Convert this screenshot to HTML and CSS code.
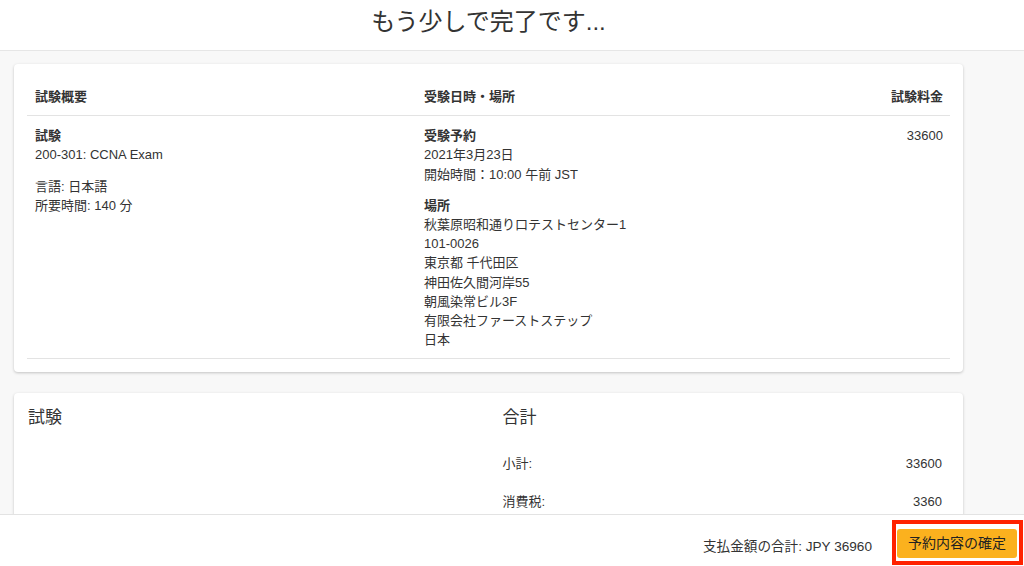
FILE: index.html
```html
<!DOCTYPE html>
<html lang="ja">
<head>
    <meta charset="UTF-8">
    <meta name="viewport" content="width=device-width, initial-scale=1.0">
    <title>予約内容の確認</title>
    <link rel="stylesheet" href="styles.css">
</head>
<body>
    <div class="page">
        <header class="top">
            <h1>もう少しで完了です...</h1>
        </header>

        <main class="main">
            <div class="card">
                <table class="summary">
                    <thead>
                        <tr>
                            <th class="col-exam">試験概要</th>
                            <th>受験日時・場所</th>
                            <th class="num">試験料金</th>
                        </tr>
                    </thead>
                    <tbody>
                        <tr>
                            <td class="col-exam">
                                <p><b>試験</b><br>200-301: CCNA Exam</p>
                                <p>言語: 日本語<br>所要時間: 140 分</p>
                            </td>
                            <td>
                                <p><b>受験予約</b><br>2021年3月23日<br>開始時間：10:00 午前 JST</p>
                                <p><b>場所</b><br>秋葉原昭和通り口テストセンター1<br>101-0026<br>東京都 千代田区<br>神田佐久間河岸55<br>朝風染常ビル3F<br>有限会社ファーストステップ<br>日本</p>
                            </td>
                            <td class="num">33600</td>
                        </tr>
                    </tbody>
                </table>
            </div>

            <div class="card totals">
                <div class="totals-col">
                    <h2>試験</h2>
                </div>
                <div class="totals-col">
                    <h2>合計</h2>
                    <div class="line"><span>小計:</span><span>33600</span></div>
                    <div class="line"><span>消費税:</span><span>3360</span></div>
                </div>
            </div>
        </main>

        <footer class="bottom">
            <div class="grand">支払金額の合計: JPY 36960</div>
            <div class="highlight">
                <button class="confirm">予約内容の確定</button>
            </div>
        </footer>
    </div>
</body>
</html>
```

FILE: styles.css
```css
* {
    box-sizing: border-box;
}
html, body {
    margin: 0;
    height: 100%;
}
body {
    font-family: "Liberation Sans", "Noto Sans CJK JP", sans-serif;
    font-size: 13px;
    color: #333;
    background: #f8f8f8;
}
.page {
    height: 100vh;
    display: flex;
    flex-direction: column;
}
.top {
    height: 51px;
    flex: none;
    background: white;
    border-bottom: 1px solid #e6e6e6;
}
.top h1 {
    width: 977px;
    margin: 0;
    text-align: center;
    font-size: 24px;
    font-weight: normal;
    line-height: 44px;
    color: #333;
}
.main {
    flex: 1;
    overflow: hidden;
    padding: 13px 0 0 14px;
}
.card {
    width: 949px;
    background: white;
    border-radius: 4px;
    box-shadow: 0 1px 3px rgba(0, 0, 0, 0.22);
}
.summary {
    width: calc(100% - 26px);
    margin: 0 13px;
    border-collapse: collapse;
    line-height: 19.2px;
}
.card:first-child {
    padding: 15px 0 13px;
}
.summary th {
    text-align: left;
    font-weight: bold;
    color: #333;
    padding: 8px 8px 9px;
    border-bottom: 1px solid #e3e3e3;
}
.summary td {
    vertical-align: top;
    padding: 10px 8px 9px;
    border-bottom: 1px solid #e3e3e3;
}
.summary .col-exam {
    width: 389px;
}
.summary .num {
    text-align: right;
    padding-right: 7px;
}
.summary p {
    margin: 0 0 12px;
}
.summary p:last-child {
    margin-bottom: 0;
}
.totals {
    margin-top: 21px;
    display: grid;
    grid-template-columns: 1fr 1fr;
    min-height: 200px;
}
.totals-col {
    padding: 13px 14px 10px;
}
.totals h2 {
    margin: 0;
    font-size: 17px;
    font-weight: normal;
    line-height: 24px;
    color: #333;
}
.totals h2 + .line {
    margin-top: 14px;
}
.line {
    display: flex;
    justify-content: space-between;
    align-items: center;
    height: 38px;
    padding-right: 7px;
    line-height: 19.2px;
}
.bottom {
    flex: none;
    height: 52px;
    background: white;
    border-top: 1px solid #e3e3e3;
    display: flex;
    justify-content: flex-end;
    align-items: flex-start;
    gap: 20px;
    padding: 5px 1px 0 0;
}
.grand {
    margin-top: 17px;
    font-size: 13.6px;
    line-height: 20px;
    color: #333;
}
.highlight {
    border: 4px solid #ff2200;
    padding: 5px 2px 3px 1px;
}
.confirm {
    display: block;
    height: 29px;
    padding: 0 11px;
    border: none;
    border-radius: 3px;
    background: #fbb11e;
    color: #222;
    font-family: inherit;
    font-size: 14px;
    line-height: 29px;
    cursor: pointer;
}
```
